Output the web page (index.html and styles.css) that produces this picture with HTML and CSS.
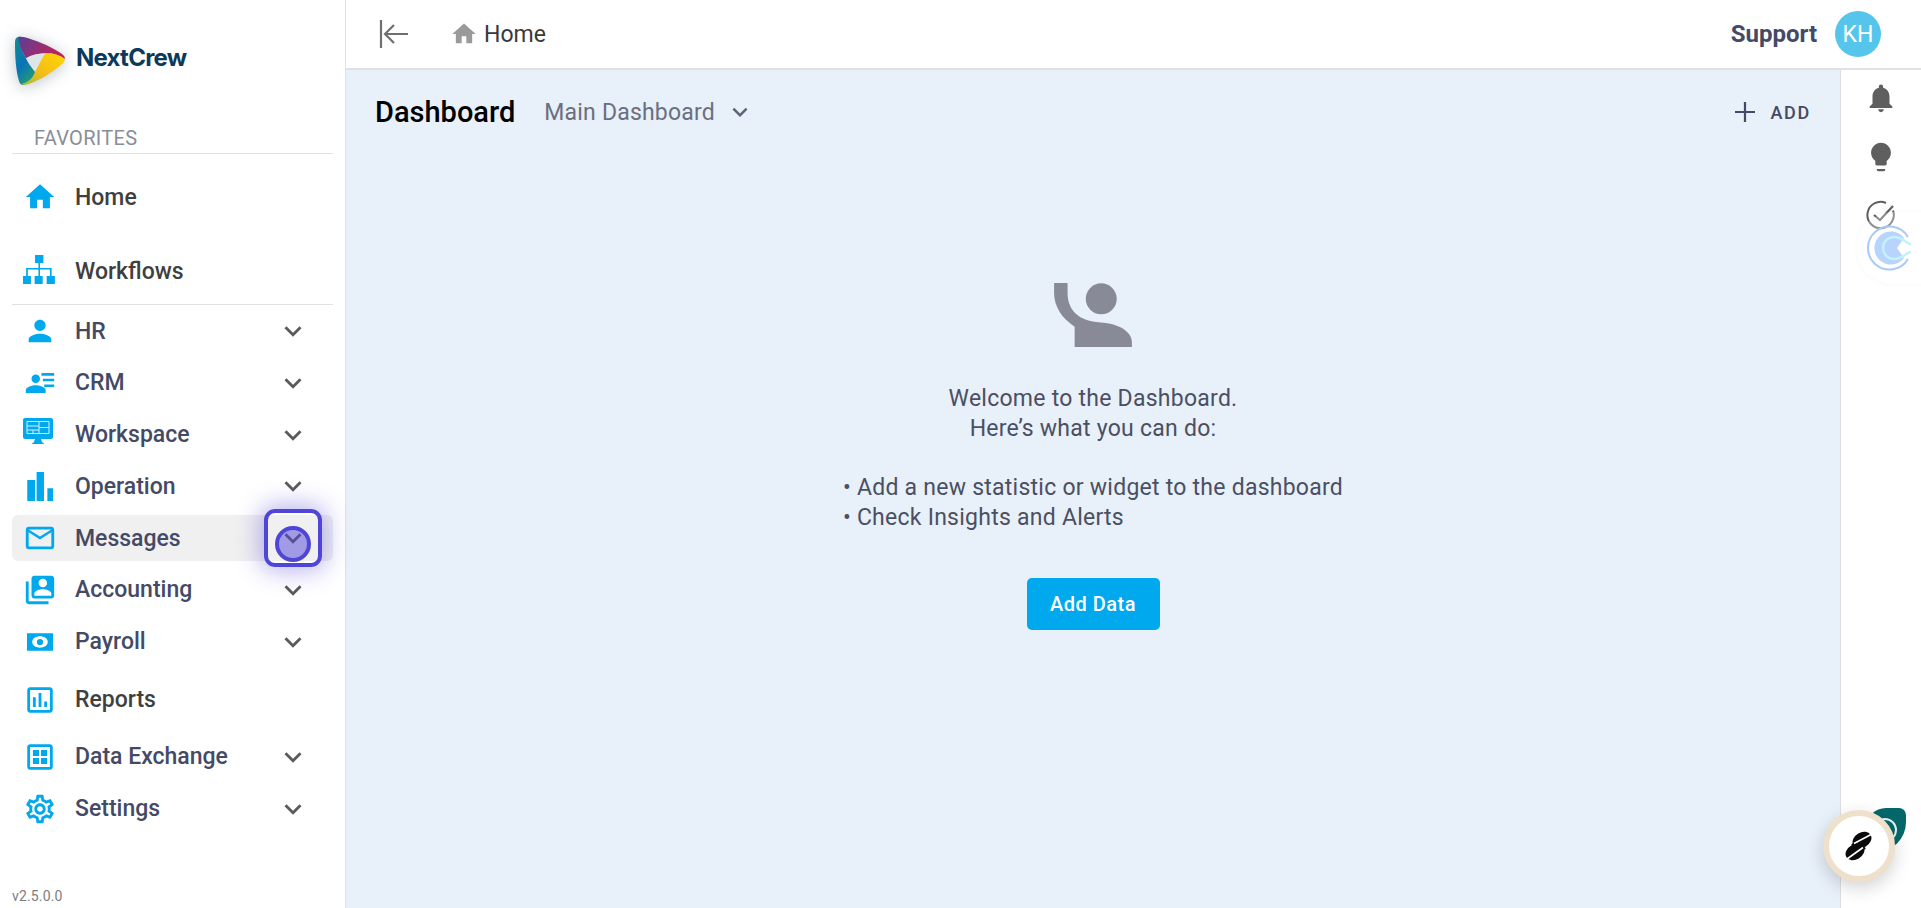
FILE: index.html
```html
<!DOCTYPE html>
<html lang="en">
<head>
<meta charset="utf-8">
<title>NextCrew Dashboard</title>
<link rel="stylesheet" href="styles.css">
</head>
<body>
<div class="app">
  <aside class="sidebar">
    <div class="brand">
      <svg class="brand-mark" viewBox="0 0 50 50">
        <defs>
          <linearGradient id="gPurple" x1="0" y1="0" x2="1" y2="0.4"><stop offset="0" stop-color="#5a3f95"/><stop offset="1" stop-color="#c0225e"/></linearGradient>
          <linearGradient id="gYellow" x1="1" y1="0" x2="0" y2="1"><stop offset="0" stop-color="#ffd800"/><stop offset="0.6" stop-color="#f2bc1a"/><stop offset="1" stop-color="#9ebd3c"/></linearGradient>
          <linearGradient id="gBlue" x1="0" y1="0" x2="0.6" y2="1"><stop offset="0" stop-color="#0d8f8f"/><stop offset="0.55" stop-color="#0a73b8"/><stop offset="1" stop-color="#27a36a"/></linearGradient>
        </defs>
        <path fill="url(#gBlue)" d="M3 2C0 3 0 6 0 9c0 13 1 27 4 37 1 4 4 5 7 3l16-8-7-4.300-9-13.400C7 16 4 9 4 2z"/>
        <path fill="url(#gPurple)" d="M4 1.500C14 2 36 11 47 19c2 1.500 3 3 3 5-6-4-12-6-20-5.700-7 .2-13 1.700-19 5C7 16 3 8 3.500 2z"/>
        <path fill="url(#gYellow)" d="M30 18.300c8-.3 15 1.700 20 5.700 0 2-2 4-4 6-10 8-22 16-34 19.500-2 .5-4 .5-6-.5 8-2 12-6 14-12.300z"/>
        <path fill="#dfe4e8" d="M11 23.300c6-3.300 12-4.800 19-5L20 36.700c-4-4.700-7-8.700-9-13.400z"/>
      </svg>
      <span class="brand-name">NextCrew</span>
    </div>
    <div class="nav-label">FAVORITES</div>
    <nav class="nav">
      <a class="nav-row nav-home dark">
        <svg class="nav-icon" viewBox="0 0 24 24"><path d="M10 20v-6h4v6h5v-8h3L12 3 2 12h3v8z"/></svg>
        <span>Home</span>
      </a>
      <a class="nav-row nav-flows dark">
        <svg class="nav-icon" viewBox="0 0 24 24"><path d="M8.500.7h5.900v5.700H8.500zM10.900 6.400H12v3.400h8.200v5.700H19V11h-7v4.500h-1.100V11H3.400v4.500H2.200V9.800h8.700zM0 15.500h5.600v5.700H0zM8.200 15.500h5.700v5.700H8.200zM16.700 15.500h5.800v5.700h-5.800z"/></svg>
        <span>Workflows</span>
      </a>
      <div class="nav-rule"></div>
      <div class="nav-group">
        <a class="nav-row">
          <svg class="nav-icon" viewBox="0 0 24 24"><path d="M12 12c2.210 0 4-1.790 4-4s-1.790-4-4-4-4 1.790-4 4 1.790 4 4 4zm0 2c-2.670 0-8 1.340-8 4v2h16v-2c0-2.660-5.330-4-8-4z"/></svg>
          <span>HR</span>
          <svg class="chev" viewBox="0 0 24 24"><path d="M16.590 8.590L12 13.170 7.410 8.590 6 10l6 6 6-6z"/></svg>
        </a>
        <a class="nav-row">
          <svg class="nav-icon" viewBox="0 0 24 24"><path d="M9 12c1.700 0 3-1.300 3-3s-1.300-3-3-3-3 1.300-3 3 1.300 3 3 3zm0 1.500c-2.300 0-7 1.200-7 3.500v2h14v-2c0-2.300-4.700-3.500-7-3.500zM13 5h9v1.800h-9zM14 9h8v1.800h-8zM15 13h7v1.800h-7z"/></svg>
          <span>CRM</span>
          <svg class="chev" viewBox="0 0 24 24"><path d="M16.590 8.590L12 13.170 7.410 8.590 6 10l6 6 6-6z"/></svg>
        </a>
        <a class="nav-row">
          <svg class="nav-icon" viewBox="0 0 34 34"><path d="M2 0h26c1.100 0 2 .9 2 2v17c0 1.100-.9 2-2 2H18l1 3 2.500 2h-13l2.500-2 1-3H2c-1.100 0-2-.9-2-2V2C0 .9.9 0 2 0z"/><path d="M4 3.500h22v12H4zM4 8h12M16 3.500v12M16 9.500h10M4 12h12M10 12v3.500" fill="none" stroke="#d6f1fd" stroke-width="1"/></svg>
          <span>Workspace</span>
          <svg class="chev" viewBox="0 0 24 24"><path d="M16.590 8.590L12 13.170 7.410 8.590 6 10l6 6 6-6z"/></svg>
        </a>
        <a class="nav-row">
          <svg class="nav-icon" viewBox="0 0 24 24"><path d="M3 7.800h5.500v14.800H3zM9.600 2.100h5.200v20.500H9.600zM17.200 13.500h4v9.100h-4z"/></svg>
          <span>Operation</span>
          <svg class="chev" viewBox="0 0 24 24"><path d="M16.590 8.590L12 13.170 7.410 8.590 6 10l6 6 6-6z"/></svg>
        </a>
        <a class="nav-row active">
          <svg class="nav-icon" viewBox="0 0 24 24"><path d="M20 4H4c-1.100 0-2 .9-2 2v12c0 1.100.9 2 2 2h16c1.100 0 2-.9 2-2V6c0-1.100-.9-2-2-2zm0 14H4V8l8 5 8-5v10zm-8-7L4 6h16l-8 5z"/></svg>
          <span>Messages</span>
          <svg class="chev" viewBox="0 0 24 24"><path d="M16.590 8.590L12 13.170 7.410 8.590 6 10l6 6 6-6z"/></svg>
        </a>
        <a class="nav-row">
          <svg class="nav-icon" viewBox="0 0 24 24"><path d="M4 6H2v14c0 1.100.9 2 2 2h14v-2H4V6zm16-4H8c-1.100 0-2 .9-2 2v12c0 1.100.9 2 2 2h12c1.100 0 2-.9 2-2V4c0-1.100-.9-2-2-2zm-6 2c1.660 0 3 1.340 3 3s-1.340 3-3 3-3-1.340-3-3 1.340-3 3-3zm6 12H8v-1.500c0-2 4-3 6-3s6 1 6 3V16z"/></svg>
          <span>Accounting</span>
          <svg class="chev" viewBox="0 0 24 24"><path d="M16.590 8.590L12 13.170 7.410 8.590 6 10l6 6 6-6z"/></svg>
        </a>
        <a class="nav-row">
          <svg class="nav-icon" viewBox="0 0 24 24"><path fill-rule="evenodd" d="M2.800 5.750h18.400v12.500H2.800zM12 8c-2.800 0-5.500 1.500-5.500 4s2.700 4 5.500 4 5.500-1.500 5.500-4-2.700-4-5.500-4zM12 9.800a2.200 2.200 0 1 1 0 4.400 2.200 2.200 0 0 1 0-4.400z"/></svg>
          <span>Payroll</span>
          <svg class="chev" viewBox="0 0 24 24"><path d="M16.590 8.590L12 13.170 7.410 8.590 6 10l6 6 6-6z"/></svg>
        </a>
      </div>
      <a class="nav-row nav-reports dark">
        <svg class="nav-icon" viewBox="0 0 24 24"><path d="M19 3H5c-1.100 0-2 .9-2 2v14c0 1.100.9 2 2 2h14c1.100 0 2-.9 2-2V5c0-1.100-.9-2-2-2zm0 16H5V5h14v14zM7 10h2v7H7zm4-3h2v10h-2zm4 6h2v4h-2z"/></svg>
        <span>Reports</span>
      </a>
      <a class="nav-row nav-data">
        <svg class="nav-icon" viewBox="0 0 24 24"><path d="M19 3H5c-1.100 0-2 .9-2 2v14c0 1.100.9 2 2 2h14c1.100 0 2-.9 2-2V5c0-1.100-.9-2-2-2zm0 16H5V5h14v14zM7 7h4.300v4.300H7zM12.700 7H17v4.300h-4.300zM7 12.700h4.300V17H7zM12.700 12.700H17V17h-4.300z"/></svg>
        <span>Data Exchange</span>
        <svg class="chev" viewBox="0 0 24 24"><path d="M16.590 8.590L12 13.170 7.410 8.590 6 10l6 6 6-6z"/></svg>
      </a>
      <a class="nav-row nav-settings">
        <svg class="nav-icon" viewBox="0 0 24 24"><path d="M19.430 12.980c.04-.32.07-.64.07-.98 0-.34-.03-.66-.07-.98l2.110-1.650c.19-.15.24-.42.12-.64l-2-3.460c-.09-.16-.26-.25-.44-.25-.06 0-.12.01-.17.03l-2.490 1c-.52-.4-1.080-.73-1.690-.98l-.38-2.650C14.460 2.180 14.250 2 14 2h-4c-.25 0-.46.18-.49.42l-.38 2.650c-.61.25-1.170.59-1.690.98l-2.490-1c-.06-.02-.12-.03-.18-.03-.17 0-.34.09-.43.25l-2 3.460c-.13.22-.07.49.12.64l2.110 1.650c-.04.32-.07.65-.07.98 0 .33.03.66.07.98l-2.110 1.650c-.19.15-.24.42-.12.64l2 3.460c.09.16.26.25.44.25.06 0 .12-.01.17-.03l2.490-1c.52.4 1.080.73 1.690.98l.38 2.650c.03.24.24.42.49.42h4c.25 0 .46-.18.49-.42l.38-2.650c.61-.25 1.170-.59 1.690-.98l2.490 1c.06.02.12.03.18.03.17 0 .34-.09.43-.25l2-3.460c.12-.22.07-.49-.12-.64l-2.110-1.650zm-1.980-1.710c.04.31.05.52.05.73 0 .21-.02.43-.05.73l-.14 1.130.89.7 1.080.84-.7 1.210-1.270-.51-1.040-.42-.9.68c-.43.32-.84.56-1.250.73l-1.060.43-.16 1.130-.2 1.350h-1.400l-.19-1.350-.16-1.130-1.060-.43c-.43-.18-.83-.41-1.230-.71l-.91-.7-1.060.43-1.270.51-.7-1.210 1.080-.84.89-.7-.14-1.130c-.03-.31-.05-.54-.05-.74s.02-.43.05-.73l.14-1.130-.89-.7-1.080-.84.7-1.210 1.270.51 1.040.42.9-.68c.43-.32.84-.56 1.250-.73l1.060-.43.16-1.130.2-1.350h1.390l.19 1.350.16 1.130 1.060.43c.43.18.83.41 1.230.71l.91.7 1.060-.43 1.270-.51.7 1.210-1.070.85-.89.7.14 1.130zM12 8c-2.210 0-4 1.790-4 4s1.790 4 4 4 4-1.790 4-4-1.790-4-4-4zm0 6c-1.100 0-2-.9-2-2s.9-2 2-2 2 .9 2 2-.9 2-2 2z"/></svg>
        <span>Settings</span>
        <svg class="chev" viewBox="0 0 24 24"><path d="M16.590 8.590L12 13.170 7.410 8.590 6 10l6 6 6-6z"/></svg>
      </a>
    </nav>
    <div class="version">v2.5.0.0</div>
  </aside>

  <div class="content">
    <header class="topbar">
      <svg class="collapse" viewBox="0 0 30 30"><path d="M2 1v28M29 15H6M15 6l-9 9 9 9" fill="none" stroke="#6f6f6f" stroke-width="2.200"/></svg>
      <svg class="crumb-icon" viewBox="0 0 24 24"><path d="M10 20v-6h4v6h5v-8h3L12 3 2 12h3v8z"/></svg>
      <span class="crumb">Home</span>
      <div class="top-right">
        <span class="support">Support</span>
        <span class="avatar">KH</span>
      </div>
    </header>
    <div class="body-row">
      <main class="main">
        <div class="main-head">
          <h1 class="title">Dashboard</h1>
          <span class="board">Main Dashboard</span>
          <svg class="board-chev" viewBox="0 0 24 24"><path d="M16.590 8.590L12 13.170 7.410 8.590 6 10l6 6 6-6z"/></svg>
          <div class="add">
            <svg class="add-icon" viewBox="0 0 18 18"><path d="M8 0h2v8h8v2h-8v8H8v-8H0V8h8z"/></svg>
            <span>ADD</span>
          </div>
        </div>
        <section class="empty">
          <svg class="empty-icon" viewBox="677 70 231 190"><circle cx="817" cy="117" r="46"/><path d="M677 70h40v30c0 50 33 85 98 87 55 3 93 28 93 58v15H738v-60c-38-25-61-60-61-100z"/></svg>
          <p class="welcome">Welcome to the Dashboard.<br>Here’s what you can do:</p>
          <ul class="tips">
            <li>• Add a new statistic or widget to the dashboard</li>
            <li>• Check Insights and Alerts</li>
          </ul>
          <button class="primary">Add Data</button>
        </section>
      </main>
      <aside class="rail">
        <svg class="rail-icon" viewBox="0 0 24 24"><path d="M12 22c1.100 0 2-.9 2-2h-4c0 1.100.89 2 2 2zm6-6v-5c0-3.070-1.640-5.640-4.500-6.320V4c0-.83-.67-1.500-1.500-1.500s-1.500.67-1.500 1.500v.68C7.630 5.360 6 7.920 6 11v5l-2 2v1h16v-1l-2-2z"/></svg>
        <svg class="rail-icon" viewBox="0 0 24 24"><path d="M9 21c0 .55.45 1 1 1h4c.55 0 1-.45 1-1v-.6H9zM12 2C8.140 2 5 5.140 5 9c0 2.380 1.190 4.470 3 5.740V17c0 .55.45 1 1 1h6c.55 0 1-.45 1-1v-2.260c1.810-1.270 3-3.360 3-5.740 0-3.860-3.140-7-7-7z"/></svg>
        <svg class="rail-check" viewBox="0 0 30 30"><path d="M27 10.500A13.200 13.200 0 1 1 20 3" fill="none" stroke="#5f5f5f" stroke-width="2"/><path d="M8 15l6 5L27 6" fill="none" stroke="#5f5f5f" stroke-width="2.200"/></svg>
      </aside>
    </div>
  </div>
</div>

<div class="focus-ring"><span class="focus-dot"></span></div>
<div class="cal-tab">
  <svg class="cal-mark" viewBox="0 0 46 46"><path d="M41 12A21.500 21.500 0 1 0 41 34" fill="none" stroke="#a8c9f8" stroke-width="2"/><path d="M37 13A16.500 16.500 0 1 0 37 33L30 23z" fill="#b8d4fc"/><path d="M44 19c-5 0-8-7-17-7a11 11 0 0 0 0 22c9 0 12-7 17-7" fill="none" stroke="#c2f2fb" stroke-width="2.500"/></svg>
</div>
<div class="teal-tab"></div>
<div class="fab">
  <svg class="fab-mark" viewBox="0 0 28 30"><ellipse cx="17" cy="9" rx="10" ry="7.500" transform="rotate(-30 17 9)" fill="#0a0a0a"/><ellipse cx="10" cy="21" rx="10" ry="7.500" transform="rotate(-30 10 21)" fill="#0a0a0a"/><path d="M9 11l9 9" stroke="#0a0a0a" stroke-width="8" fill="none"/><path d="M27 3L9 12.500M18 16.500L2 28" stroke="#fff" stroke-width="1.600" fill="none"/></svg>
</div>
</body>
</html>
```

FILE: styles.css
```css
* { box-sizing: border-box; }
html, body { margin: 0; height: 100%; overflow: hidden; }
body { font-family: Roboto, "Noto Sans", sans-serif; background: #fff; color: #444a66; }

.app { display: flex; height: 908px; }

/* Sidebar */
.sidebar { width: 346px; flex: none; display: flex; flex-direction: column; border-right: 1px solid #dfe1e5; padding: 0 12px; background: #fff; }
.brand { display: flex; align-items: flex-start; height: 125px; padding: 35px 0 0 3px; flex: none; }
.brand-mark { width: 50px; height: 50px; flex: none; filter: drop-shadow(0 2px 8px rgba(70, 90, 110, .35)); }
.brand-name { margin: 11px 0 0 11px; font: 700 24px/24px Inter, Roboto, sans-serif; letter-spacing: -.75px; color: #0b3a5a; }
.nav-label { height: 29px; padding-left: 22px; font-size: 20px; letter-spacing: .3px; line-height: 26px; color: #8a8d99; border-bottom: 1px solid #dfe1e5; flex: none; }
.nav { display: flex; flex-direction: column; flex: 1; }
.nav-row { display: flex; align-items: center; height: 46px; padding-left: 11px; border-radius: 6px; font-size: 23px; font-weight: 500; color: #444a66; flex: none; }
.nav-row > span { margin-left: 18px; flex: 1; }
.nav-row.dark { color: #3f3f3f; }
.nav-home { margin-top: 20px; }
.nav-flows { margin-top: 28px; }
.nav-rule { height: 1px; background: #dfe1e5; margin-top: 10px; flex: none; }
.nav-group { display: flex; flex-direction: column; gap: 5.800px; margin-top: 3px; }
.nav-reports { margin-top: 12px; }
.nav-data { margin-top: 11px; }
.nav-settings { margin-top: 6px; }
.nav-row.active { background: #f0f0f0; }
.nav-icon { width: 34px; height: 34px; fill: #00a8ee; flex: none; }
.chev { width: 34px; height: 34px; fill: #5b5b5b; flex: none; margin-right: 23px; }
.version { height: 24px; font-size: 14px; letter-spacing: .15px; line-height: 24px; color: #7d7d7d; flex: none; }

/* Content */
.content { flex: 1; display: flex; flex-direction: column; min-width: 0; }
.topbar { height: 70px; display: flex; align-items: center; border-bottom: 2px solid #dfe1e5; padding-left: 33px; flex: none; background: #fff; }
.collapse { width: 30px; height: 30px; flex: none; }
.crumb-icon { width: 28px; height: 28px; margin-left: 41px; fill: #9a9a9a; flex: none; }
.crumb { margin-left: 6px; font-size: 23px; color: #3a3a3a; }
.top-right { margin-left: auto; display: flex; align-items: center; padding-right: 40px; }
.support { font-size: 24px; font-weight: 700; color: #444a66; }
.avatar { width: 46px; height: 46px; margin-left: 18px; border-radius: 50%; background: #55c5ec; color: #fff; font-size: 23px; display: flex; align-items: center; justify-content: center; }
.body-row { flex: 1; display: flex; min-height: 0; }
.main { flex: 1; background: #e8f0f9; display: flex; flex-direction: column; }
.main-head { display: flex; align-items: center; height: 84px; padding: 0 29px; flex: none; }
.title { margin: 0; font-size: 29px; font-weight: 500; color: #000; }
.board { margin-left: 29px; font-size: 23px; color: #6a6f80; letter-spacing: .2px; }
.board-chev { width: 30px; height: 30px; margin-left: 10px; fill: #5f6275; }
.add { margin-left: auto; display: flex; align-items: center; gap: 15px; font-size: 18px; font-weight: 500; letter-spacing: 1.700px; color: #444a66; }
.add-icon { width: 20px; height: 20px; fill: #444a66; }
.empty { display: flex; flex-direction: column; align-items: center; padding-top: 129px; }
.empty-icon { width: 78px; height: 64px; fill: #888b97; }
.welcome { margin: 37px 0 0; font-size: 23px; letter-spacing: .25px; line-height: 30px; text-align: center; color: #4b4f63; }
.tips { list-style: none; margin: 29px 0 0; padding: 0; font-size: 23px; letter-spacing: .25px; line-height: 30px; color: #4b4f63; }
.primary { margin-top: 45px; width: 133px; height: 52px; border: 0; border-radius: 5px; background: #00a8ee; color: #fff; font: 500 20px Roboto, sans-serif; letter-spacing: .5px; }
.rail { width: 81px; flex: none; display: flex; flex-direction: column; align-items: center; border-left: 1px solid #dcdee2; background: #fff; padding-top: 11px; }
.rail-icon { width: 34px; height: 34px; fill: #5f5f5f; flex: none; }
.rail-icon + .rail-icon { margin-top: 25px; }
.rail-check { width: 30px; height: 30px; margin-top: 26px; flex: none; }

/* Floating layers */
.focus-ring { position: absolute; left: 264px; top: 509px; width: 58px; height: 58px; border: 4px solid #4f46d8; border-radius: 11px; box-shadow: 0 0 24px 4px rgba(79, 70, 216, .4); display: flex; justify-content: center; padding-top: 14px; }
.focus-dot { width: 36px; height: 36px; border-radius: 50%; border: 4px solid #4f46d8; background: rgba(79, 70, 216, .5); margin-top: -1px; }
.cal-tab { position: absolute; left: 1857px; top: 212px; width: 64px; height: 72px; border-radius: 36px 0 0 36px; background: rgba(255, 255, 255, .3); box-shadow: 0 0 6px rgba(0, 0, 0, .04); display: flex; align-items: center; padding-left: 10px; }
.cal-mark { width: 46px; height: 46px; }
.teal-tab { position: absolute; left: 1866px; top: 808px; width: 40px; height: 44px; background: #04686a; border-radius: 20px 7px 30px 6px; }
.teal-tab::after { content: ""; position: absolute; left: 7px; top: 10px; width: 20px; height: 20px; border: 2px solid #e8f4f2; border-radius: 50%; }
.fab { position: absolute; left: 1823px; top: 810px; width: 72px; height: 72px; border-radius: 50%; background: #fff; border: 6px solid #efe0cb; box-shadow: 0 6px 18px rgba(0, 0, 0, .18); display: flex; align-items: center; justify-content: center; }
.fab-mark { width: 28px; height: 30px; }
```
